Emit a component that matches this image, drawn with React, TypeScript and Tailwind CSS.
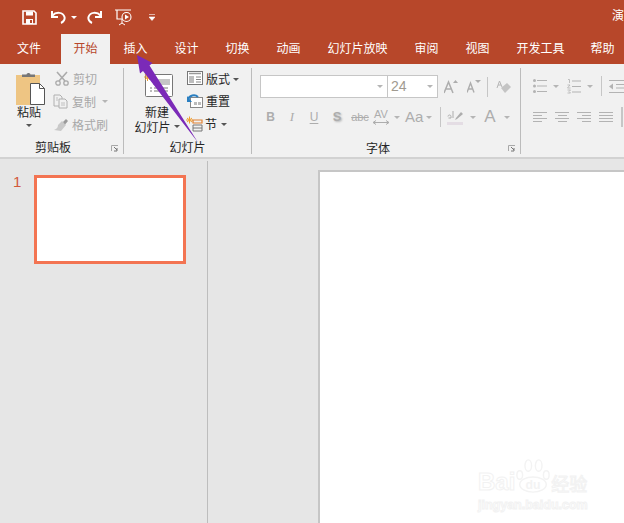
const cjk = 'font-["Noto_Sans_CJK_SC","Liberation_Sans",sans-serif]';

const tabs = [
  { label: '文件', w: 'w-[58px] ml-[0px]' },
  { label: '开始', w: 'w-[49px] ml-[3px]', active: true },
  { label: '插入', w: 'w-[51px]' },
  { label: '设计', w: 'w-[51px]' },
  { label: '切换', w: 'w-[51px]' },
  { label: '动画', w: 'w-[51px]' },
  { label: '幻灯片放映', w: 'w-[87px]' },
  { label: '审阅', w: 'w-[51px]' },
  { label: '视图', w: 'w-[51px]' },
  { label: '开发工具', w: 'w-[75px]' },
  { label: '帮助', w: 'w-[49px]' },
];

// small dropdown triangle
function Caret({ dark = false, className = '' }: { dark?: boolean; className?: string }) {
  return (
    <svg width="6" height="3" viewBox="0 0 6 3" className={`shrink-0 ${className}`}>
      <path d="M0 0h6L3 3z" fill={dark ? '#555' : '#b5b5b5'} />
    </svg>
  );
}

function Launcher() {
  return (
    <svg width="8" height="7" viewBox="0 0 8 7" className="absolute right-[4px] bottom-[2px]">
      <path d="M.5 6V.5H7" fill="none" stroke="#a8a8a8" />
      <path d="M3 2l3 3M6 3v3H3" fill="none" stroke="#777" />
    </svg>
  );
}

function QuickBar() {
  return (
    <div className="flex items-center h-[34px] bg-[#b7472a] overflow-hidden">
      <svg width="15" height="15" viewBox="0 0 15 15" className="ml-[22px] shrink-0 -mt-[0px]">
        <path d="M1 1h11l2 2v11H1z" fill="none" stroke="#fff" strokeWidth="1.600" />
        <path d="M4 1.500h7v4H4zM4 9h7v5H4z" fill="#fff" />
        <path d="M8 10h2v3H8z" fill="#b7472a" />
      </svg>
      <svg width="15" height="14" viewBox="0 0 15 14" className="ml-[14px] shrink-0">
        <path d="M1.500 5.500C5 1.500 12 2 13.500 7c.6 2.500-1 5-3.500 6" fill="none" stroke="#fff" strokeWidth="2" />
        <path d="M1 1v6h6" fill="none" stroke="#fff" strokeWidth="2" />
      </svg>
      <svg width="6" height="3" viewBox="0 0 6 3" className="ml-[5px] shrink-0">
        <path d="M0 0h6L3 3z" fill="#fff" />
      </svg>
      <svg width="15" height="14" viewBox="0 0 15 14" className="ml-[10px] shrink-0">
        <path d="M13.500 5.500C10 1.500 3 2 1.500 7c-.6 2.500 1 5 3.500 6" fill="none" stroke="#fff" strokeWidth="2" />
        <path d="M14 1v6H8" fill="none" stroke="#fff" strokeWidth="2" />
      </svg>
      <svg width="17" height="17" viewBox="0 0 17 17" className="ml-[13px] shrink-0">
        <path d="M0 1h16M2 1.500V10h5" fill="none" stroke="#fff" strokeWidth="1.200" />
        <circle cx="11.500" cy="8" r="4.500" fill="none" stroke="#fff" strokeWidth="1.100" />
        <path d="M10 5.500l4 2.500-4 2.500z" fill="#fff" />
        <path d="M7 10v4M4 16l3-2 3 2" fill="none" stroke="#fff" />
      </svg>
      <svg width="6" height="7" viewBox="0 0 6 7" className="ml-[17px] shrink-0">
        <path d="M0 .5h6M0 3h6L3 6.500z" fill="#fff" stroke="#fff" strokeWidth=".6" />
      </svg>
      <span className={`ml-[457px] mb-[4px] text-[12px] text-white whitespace-nowrap shrink-0 ${cjk}`}>演示文稿1 - PowerPoint</span>
    </div>
  );
}

function TabRow() {
  return (
    <div className={`flex h-[30px] bg-[#b7472a] ${cjk}`}>
      {tabs.map((t) => (
        <div
          key={t.label}
          className={`${t.w} shrink-0 flex items-center justify-center pb-[2px] text-[12px] ${
            t.active ? 'bg-[#f1f1f1] text-[#b7472a]' : 'text-white'
          }`}
        >
          {t.label}
        </div>
      ))}
    </div>
  );
}

function ClipboardGroup() {
  return (
    <div className="relative w-[124px] h-[86px] border-r border-[#bcbcbc] shrink-0 flex flex-col">
      <div className="flex h-[70px]">
        <div className="w-[53px] flex flex-col items-center pl-[5px] shrink-0">
          <svg width="29" height="33" viewBox="0 0 29 33" className="mt-[4px] ml-[3px] shrink-0">
            <path d="M0 3h24v30H0z" fill="#eec583" />
            <path d="M6 5V2.500h4.500C11 .5 14 .5 14.500 2.500H19V5z" fill="#777" />
            <path d="M14.500 11.500h9l5 5v16h-14z" fill="#fff" stroke="#555" />
            <path d="M23.500 11.500v5h5" fill="none" stroke="#555" />
          </svg>
          <span className="text-[12px] leading-[14px] text-[#262626]">粘贴</span>
          <Caret dark className="mt-[5px]" />
        </div>
        <div className="flex flex-col text-[12px] text-[#a8a8a8]">
          <div className="flex items-center h-[22px]">
            <svg width="14" height="15" viewBox="0 0 14 15" className="ml-[2px] mr-[4px] -mt-[2px] shrink-0">
              <path d="M2 1l8 9M12 1L4 10" fill="none" stroke="#ababab" strokeWidth="1.600" />
              <circle cx="3" cy="12" r="2.200" fill="none" stroke="#ababab" strokeWidth="1.300" />
              <circle cx="11" cy="12" r="2.200" fill="none" stroke="#ababab" strokeWidth="1.300" />
            </svg>
            剪切
          </div>
          <div className="flex items-center h-[23px]">
            <svg width="15" height="15" viewBox="0 0 15 15" className="ml-[0px] mr-[4px] shrink-0">
              <path d="M1 1h6l2 2v9H1z" fill="#f1f1f1" stroke="#b0b0b0" />
              <path d="M6 5h6l2 2v7H6z" fill="#f1f1f1" stroke="#b0b0b0" />
              <path d="M8 9h4M8 11h4M3 4h2M3 6h2" stroke="#c0c0c0" />
            </svg>
            复制
            <Caret className="ml-[6px]" />
          </div>
          <div className="flex items-center h-[23px]">
            <svg width="16" height="14" viewBox="0 0 16 14" className="mr-[3px] shrink-0">
              <path d="M9 3l4 4-5 6-7-1c3-1 4-3 4-5z" fill="#c9c9c9" />
              <path d="M10 4l3-3 2 2-3 3.500z" fill="#9a9a9a" />
            </svg>
            格式刷
          </div>
        </div>
      </div>
      <span className="text-center text-[12px] leading-[14px] mt-[3px] mr-[17px] text-[#262626]">剪贴板</span>
      <Launcher />
    </div>
  );
}

function SlidesGroup() {
  return (
    <div className="relative w-[128px] h-[86px] border-r border-[#bcbcbc] shrink-0 flex flex-col text-[#262626]">
      <div className="flex h-[70px]">
        <div className="w-[60px] ml-[3px] flex flex-col items-center shrink-0">
          <svg width="30" height="25" viewBox="0 0 30 25" className="mt-[5px] ml-[3px] shrink-0">
            <rect x="1.500" y="1.500" width="27" height="22" rx="1" fill="#fff" stroke="#777" />
            <path d="M9 6h17v6H9z" fill="#c6c6c6" />
            <path d="M6 15h2M10 15h14M6 18h2M10 18h14" stroke="#777" />
            <path d="M0 4h7M3.500 0v8M1 1l5 6M6 1L1 7" stroke="#f0a030" strokeWidth="1" />
          </svg>
          <span className="text-[12px] leading-[15px] mt-[6px]">新建</span>
          <div className="flex items-center text-[12px] leading-[15px]">
            幻灯片
            <Caret dark className="ml-[3px]" />
          </div>
        </div>
        <div className="flex flex-col text-[12px]">
          <div className="flex items-center h-[22px]">
            <svg width="16" height="14" viewBox="0 0 16 14" className="mr-[3px] -mt-[2px] shrink-0">
              <rect x=".5" y=".5" width="15" height="13" fill="#fff" stroke="#777" />
              <path d="M2 2.500h12" stroke="#999" strokeWidth="1.500" />
              <path d="M2 5h5v7H2z" fill="#bdbdbd" />
              <path d="M9 6h5M9 8.500h5M9 11h5" stroke="#888" />
            </svg>
            版式
            <Caret dark className="ml-[3px]" />
          </div>
          <div className="flex items-center h-[22px]">
            <svg width="16" height="14" viewBox="0 0 16 14" className="mr-[3px] shrink-0">
              <rect x="3.500" y="3.500" width="12" height="10" fill="#fff" stroke="#888" />
              <path d="M7 8h3v3H7zM11 8h3v3h-3z" fill="#bbb" />
              <path d="M1 6C2 1 8 0 11 3" fill="none" stroke="#2a7fc1" strokeWidth="2" />
              <path d="M0 2v6h5z" fill="#2a7fc1" />
            </svg>
            重置
          </div>
          <div className="flex items-center h-[24px]">
            <svg width="17" height="16" viewBox="0 0 17 16" className="mr-[2px] -ml-[1px] shrink-0">
              <path d="M0 4h7M3.500 .5v7M1 2l5 4M6 2L1 6" stroke="#f0a030" />
              <path d="M7 4h9v3H7z" fill="none" stroke="#e08030" strokeWidth="1.200" />
              <path d="M7 9h9v6H7zM7 12h9" fill="none" stroke="#777" />
            </svg>
            节
            <Caret dark className="ml-[4px]" />
          </div>
        </div>
      </div>
      <span className="text-center text-[12px] leading-[14px] mt-[3px] text-[#262626]">幻灯片</span>
    </div>
  );
}

function FontGroup() {
  return (
    <div className="relative w-[269px] h-[86px] border-r border-[#bcbcbc] shrink-0 flex flex-col">
      <div className="flex items-center mt-[7px] ml-[8px] h-[23px]">
        <div className="w-[128px] h-[23px] bg-white border border-[#c6c6c6] flex items-center justify-end pr-[4px] shrink-0">
          <Caret />
        </div>
        <div className="w-[50px] h-[23px] bg-white border border-l-0 border-[#c6c6c6] flex items-center justify-between pl-[3px] pr-[4px] shrink-0">
          <span className='text-[14px] text-[#a09a90] font-["Liberation_Sans",sans-serif]'>24</span>
          <Caret />
        </div>
        <svg width="15" height="14" viewBox="0 0 15 14" className="ml-[6px] shrink-0">
          <path d="M0 13L4.500 2 9 13M2 9h5" fill="none" stroke="#adadad" strokeWidth="1.500" />
          <path d="M9 3l2.500-3L14 3z" fill="#adadad" />
        </svg>
        <svg width="14" height="13" viewBox="0 0 14 13" className="ml-[8px] shrink-0">
          <path d="M0 12.500L3.500 3 7 12.500M1.500 9h4" fill="none" stroke="#adadad" strokeWidth="1.400" />
          <path d="M8 0h6l-3 3z" fill="#adadad" />
        </svg>
        <div className="w-px h-[20px] bg-[#c6c6c6] ml-[6px] shrink-0" />
        <svg width="15" height="15" viewBox="0 0 15 15" className="ml-[8px] shrink-0">
          <path d="M1 9L3.500 2 6 8M2 6h3" fill="none" stroke="#b5b5b5" />
          <path d="M5 9l6-5 4 4-6 6z" fill="#c4c4c4" />
        </svg>
      </div>
      <div className='flex items-center mt-[7px] h-[24px] text-[#adadad] font-["Liberation_Sans",sans-serif]'>
        <span className="w-[13px] ml-[12px] text-center text-[12px] font-bold">B</span>
        <span className="w-[10px] ml-[10px] text-center text-[13px] italic font-['Liberation_Serif',serif]">I</span>
        <span className="w-[12px] ml-[11px] text-center text-[12px] underline underline-offset-2">U</span>
        <span className="w-[12px] ml-[11px] text-center text-[13px] font-bold [text-shadow:1px_1px_2px_#b5b5b5]">S</span>
        <span className="w-[18px] ml-[8px] text-center text-[11px] line-through">abc</span>
        <div className="flex flex-col items-center w-[16px] ml-[4px] text-[11px] leading-[11px]">
          AV
          <svg width="16" height="5" viewBox="0 0 16 5" className="shrink-0">
            <path d="M0 2.500h16M3 .5L0 2.500l3 2M13 .5l3 2-3 2" fill="none" stroke="#adadad" />
          </svg>
        </div>
        <Caret className="ml-[5px]" />
        <span className="ml-[5px] text-[15px]">Aa</span>
        <Caret className="ml-[3px]" />
        <div className="w-px h-[20px] bg-[#c6c6c6] ml-[8px] shrink-0" />
        <svg width="17" height="16" viewBox="0 0 17 16" className="ml-[6px] shrink-0">
          <path d="M0 13h16v3H0z" fill="#e4dde4" />
          <path d="M9 9l5-6 2 2-6 5-2 1z" fill="#adadad" />
          <path d="M1 7.500c0-2 3-2 3 0V9H1.500M6 2v7" fill="none" stroke="#adadad" />
        </svg>
        <Caret className="ml-[6px]" />
        <span className="ml-[8px] text-[17px]">A</span>
        <Caret className="ml-[8px]" />
      </div>
      <span className="absolute left-[114px] bottom-[-1px] text-[12px] leading-[14px] text-[#262626]">字体</span>
      <Launcher />
    </div>
  );
}

function AlignIcon({ lines }: { lines: string }) {
  return (
    <svg width="14" height="11" viewBox="0 0 14 11" className="shrink-0">
      <path d={lines} stroke="#b3b3b3" fill="none" />
    </svg>
  );
}

function ParagraphGroup() {
  return (
    <div className="flex flex-col pl-[12px] overflow-hidden">
      <div className="flex items-center mt-[8px] h-[20px]">
        <svg width="14" height="14" viewBox="0 0 14 14" className="shrink-0">
          <path d="M4 1.500h10M4 7h10M4 12.500h10" stroke="#b3b3b3" />
          <circle cx="1.500" cy="1.500" r="1.500" fill="#b3b3b3" />
          <circle cx="1.500" cy="7" r="1.500" fill="#b3b3b3" />
          <circle cx="1.500" cy="12.500" r="1.500" fill="#b3b3b3" />
        </svg>
        <Caret className="ml-[6px]" />
        <svg width="14" height="15" viewBox="0 0 14 15" className="ml-[8px] shrink-0">
          <path d="M5 2h9M5 7.500h9M5 13h9" stroke="#b3b3b3" />
          <path d="M1 .5h1.500V4M.5 6h2.500L.5 9h3M.5 11h3l-1.500 1.500 1.500 1.500h-3" fill="none" stroke="#b3b3b3" strokeWidth=".8" />
        </svg>
        <Caret className="ml-[6px]" />
        <div className="w-px h-[20px] bg-[#c6c6c6] ml-[8px] shrink-0" />
        <svg width="16" height="13" viewBox="0 0 16 13" className="ml-[7px] shrink-0">
          <path d="M0 .5h16M7 4.500h9M7 8h9M0 12.500h16" stroke="#b3b3b3" />
          <path d="M0 6.500l4-3v6z" fill="#b3b3b3" />
        </svg>
      </div>
      <div className="flex items-center mt-[11px] gap-[8px] h-[20px]">
        <AlignIcon lines="M0 .5h14M0 3.500h9M0 6.500h14M0 9.500h9" />
        <AlignIcon lines="M0 .5h14M3 3.500h9M0 6.500h14M3 9.500h9" />
        <AlignIcon lines="M0 .5h14M5 3.500h9M0 6.500h14M5 9.500h9" />
        <AlignIcon lines="M0 .5h14M0 3.500h14M0 6.500h14M0 9.500h14" />
        <div className="w-[2px] h-[20px] bg-[#c6c6c6] shrink-0" />
      </div>
    </div>
  );
}

function Ribbon() {
  return (
    <div className={`flex h-[95px] pt-[4px] bg-[#f1f1f1] border-b-2 border-[#d2d2d2] ${cjk}`}>
      <ClipboardGroup />
      <SlidesGroup />
      <FontGroup />
      <ParagraphGroup />
    </div>
  );
}

function Workspace() {
  return (
    <div className="flex h-[364px] bg-[#e6e6e6] overflow-hidden">
      <div className="w-[207px] shrink-0 flex items-start">
        <span className='w-[34px] pl-[13px] mt-[14px] text-[15px] leading-[17px] text-[#d2593c] font-["Liberation_Sans",sans-serif]'>1</span>
        <div className="w-[152px] h-[89px] mt-[16px] bg-white border-[3px] border-[#f37452]" />
      </div>
      <div className="w-px h-[362px] mt-[2px] bg-[#bdbdbd] shrink-0" />
      <div className="flex-1 pl-[110px] pt-[11px]">
        <div className="w-[400px] h-[400px] bg-white border-l-2 border-t-2 border-[#c6c6c6]" />
      </div>
    </div>
  );
}

// faint watermark in the lower right corner
function Watermark() {
  return (
    <div className='absolute left-[478px] top-[456px] w-[130px] h-[56px] text-white font-["Liberation_Sans",sans-serif]'>
      <div className="flex items-end h-[38px] whitespace-nowrap">
        <span className="text-[24px] leading-[24px] font-bold [-webkit-text-stroke:1px_#f2f2f2]">Bai</span>
        <svg width="36" height="36" viewBox="0 0 38 36" className="shrink-0">
          <g fill="none" stroke="#f3f3f3" strokeWidth="1.500">
            <ellipse cx="19" cy="27" rx="14" ry="8" />
            <ellipse cx="5" cy="17" rx="3" ry="4.500" />
            <ellipse cx="14" cy="7" rx="3.500" ry="6" />
            <ellipse cx="25" cy="7" rx="3.500" ry="6" />
            <ellipse cx="33" cy="17" rx="3" ry="4.500" />
          </g>
          <text x="19" y="32" textAnchor="middle" fontSize="13" fontWeight="700" fill="#f3f3f3">du</text>
        </svg>
        <span className={`text-[18px] leading-[22px] [-webkit-text-stroke:1px_#f2f2f2] ${cjk}`}>经验</span>
      </div>
      <div className="text-[12.5px] leading-[14px] mt-[4px] whitespace-nowrap font-bold [-webkit-text-stroke:1px_#f2f2f2]">jingyan.baidu.com</div>
    </div>
  );
}

export default function App() {
  return (
    <div className="relative w-[624px] h-[523px] overflow-hidden bg-white">
      <QuickBar />
      <TabRow />
      <Ribbon />
      <Workspace />
      <Watermark />
      {/* purple annotation arrow */}
      <svg width="624" height="523" viewBox="0 0 624 523" className="absolute left-0 top-0 pointer-events-none">
        <path d="M137 55L152.500 63 149.500 65.500 198 142.500 143 71 140 73.500z" fill="#7b2ab8" />
      </svg>
    </div>
  );
}
